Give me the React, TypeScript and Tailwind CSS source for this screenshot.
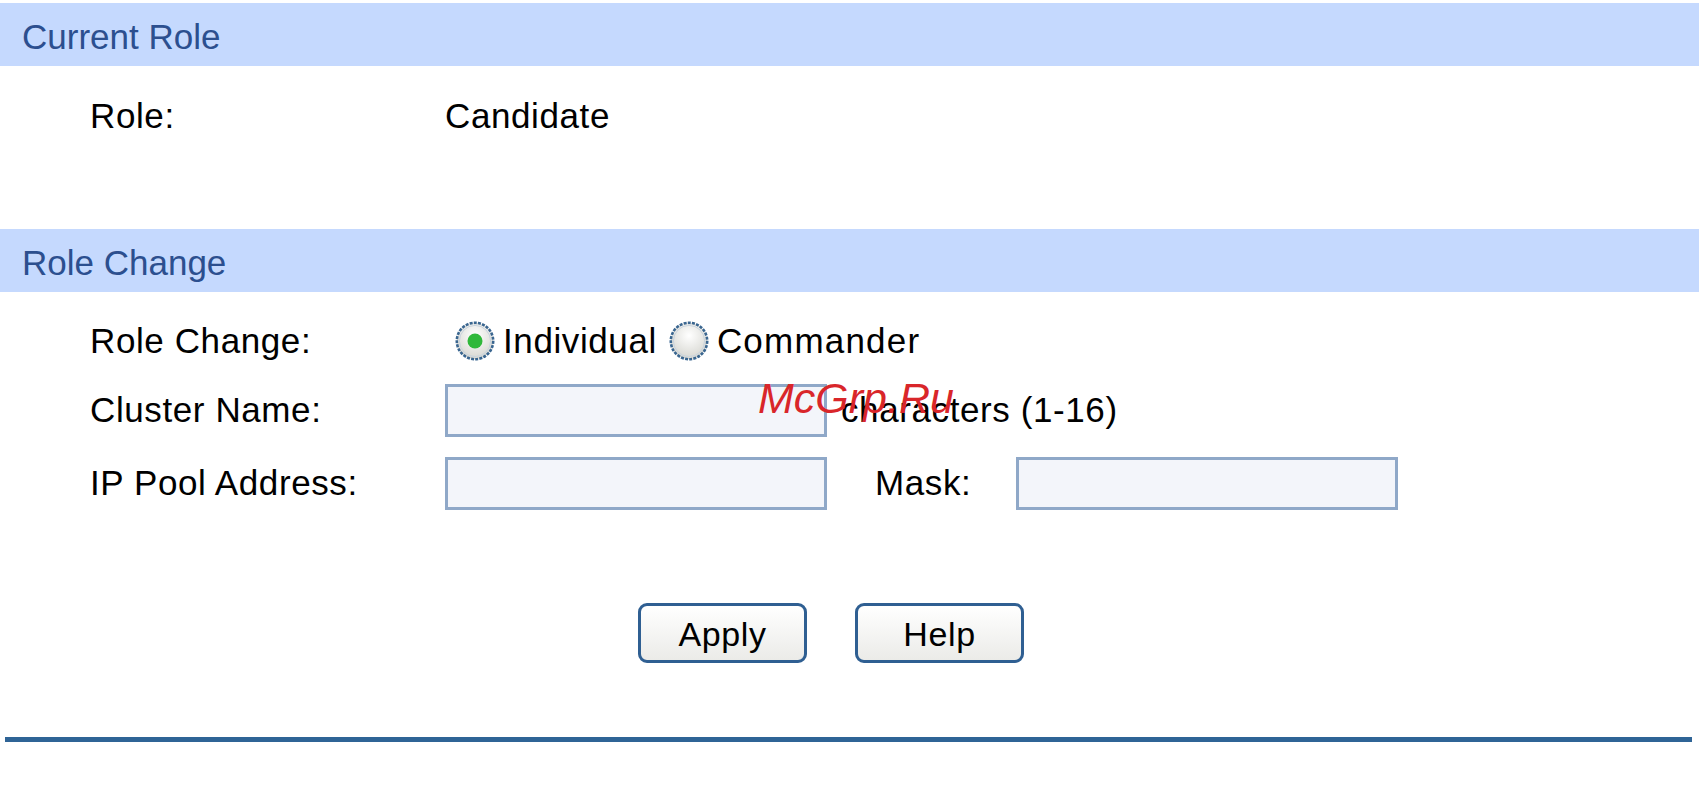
import React from "react";

const font = { fontFamily: '"Liberation Sans", Arial, sans-serif' };

function Radio({ checked }: { checked?: boolean }) {
  const id = checked ? "rg1" : "rg2";
  return (
    <svg width="40" height="40" viewBox="0 0 40 40" className="shrink-0">
      <defs>
        <radialGradient id={id} cx="50%" cy="35%" r="65%">
          <stop offset="0%" stopColor="#ffffff" />
          <stop offset="100%" stopColor="#d6d6d0" />
        </radialGradient>
      </defs>
      <circle cx="20" cy="20" r="18.2" fill={`url(#${id})`} stroke="#3a6690" strokeWidth="2.6" strokeDasharray="3 1.2" />
      <circle cx="20" cy="20" r="15.6" fill="none" stroke="#c9d4de" strokeWidth="1" />
      {checked && <circle cx="20" cy="20" r="7.5" fill="#2fb83a" />}
    </svg>
  );
}

function Bar({ title }: { title: string }) {
  return (
    <div className="h-[63px] w-[1699px] bg-[#c5d9fe] flex items-center pl-[22px] pt-[6px] text-[35px] text-[#2c4f8f]">
      {title}
    </div>
  );
}

function Field() {
  return <div className="h-[53px] w-[382px] shrink-0 bg-[#f3f5fa] border-[3px] border-[#8fa8c8]" />;
}

function Btn({ label }: { label: string }) {
  return (
    <button className="h-[60px] w-[169px] rounded-[9px] border-[3px] border-[#2f5f92] bg-gradient-to-b from-[#ffffff] to-[#ebebe8] text-[34px] tracking-[0.6px] text-black flex items-center justify-center pt-[2px]">
      {label}
    </button>
  );
}

export default function App() {
  return (
    <div className="relative w-[1702px] h-[796px] bg-white overflow-hidden text-black" style={font}>
      <div className="pt-[3px]">
        <Bar title="Current Role" />
        <div className="h-[163px] pt-[30px] tracking-[0.6px]">
          <div className="flex h-[40px] items-center text-[35px]">
            <span className="w-[445px] pl-[90px]">Role:</span>
            <span>Candidate</span>
          </div>
        </div>

        <Bar title="Role Change" />
        <div className="pt-[29px] text-[35px] tracking-[0.6px]">
          <div className="flex h-[40px] items-center">
            <span className="w-[455px] pl-[90px]">Role Change:</span>
            <Radio checked />
            <span className="ml-[8px]">Individual</span>
            <span className="ml-[12px]"><Radio /></span>
            <span className="ml-[8px] tracking-[1.2px]">Commander</span>
          </div>
          <div className="flex h-[53px] items-center mt-[23px]">
            <span className="w-[445px] pl-[90px]">Cluster Name:</span>
            <Field />
            <span className="ml-[14px]">characters (1-16)</span>
          </div>
          <div className="flex h-[53px] items-center mt-[20px]">
            <span className="w-[445px] pl-[90px]">IP Pool Address:</span>
            <Field />
            <span className="w-[189px] shrink-0 pl-[48px]">Mask:</span>
            <Field />
          </div>
          <div className="flex gap-[48px] mt-[93px] pl-[638px]">
            <Btn label="Apply" />
            <Btn label="Help" />
          </div>
        </div>
        <div className="mt-[74px] ml-[5px] w-[1687px] h-[5px] bg-[#2f6496]" />
      </div>

      {/* watermark */}
      <div className="absolute left-[758px] top-[366px] text-[43px] italic text-[#d9262a] pointer-events-none">
        McGrp.Ru
      </div>
    </div>
  );
}
